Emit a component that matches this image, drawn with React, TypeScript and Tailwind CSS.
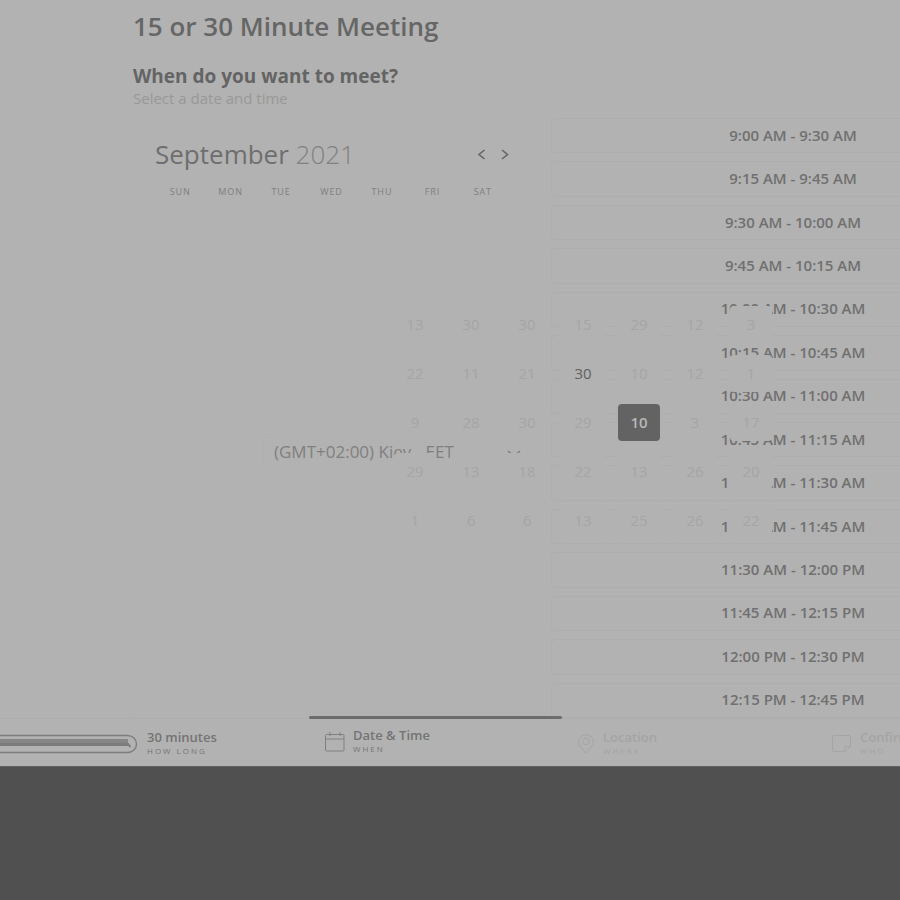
import React from "react";

const slots = [
  "9:00 AM - 9:30 AM",
  "9:15 AM - 9:45 AM",
  "9:30 AM - 10:00 AM",
  "9:45 AM - 10:15 AM",
  "10:00 AM - 10:30 AM",
  "10:15 AM - 10:45 AM",
  "10:30 AM - 11:00 AM",
  "10:45 AM - 11:15 AM",
  "11:00 AM - 11:30 AM",
  "11:15 AM - 11:45 AM",
  "11:30 AM - 12:00 PM",
  "11:45 AM - 12:15 PM",
  "12:00 PM - 12:30 PM",
  "12:15 PM - 12:45 PM",
];

const weekdays = ["SUN", "MON", "TUE", "WED", "THU", "FRI", "SAT"];

const weeks = [
  [13, 30, 30, 15, 29, 12, 3],
  [22, 11, 21, 30, 10, 12, 1],
  [9, 28, 30, 29, 10, 3, 17],
  [29, 13, 18, 22, 13, 26, 20],
  [1, 6, 6, 13, 25, 26, 22],
];

function dayClass(week: number, day: number) {
  if (week === 2 && day === 4) return "bg-[#636363] font-semibold text-[#b8b8b8]";
  if (week === 1 && day === 3) return "bg-[#b2b2b2] text-[#606060]";
  return "bg-[#b2b2b2] text-[#a5a5a5]";
}

function Chevron({ d }: { d: string }) {
  return (
    <svg width="14" height="14" viewBox="0 0 14 14" fill="none" stroke="currentColor" strokeWidth="1.6" aria-hidden="true">
      <path d={d} />
    </svg>
  );
}

function DurationIcon() {
  return (
    <svg className="shrink-0" width="138" height="20" viewBox="0 0 138 20" fill="none" stroke="#7e7e7e" strokeWidth="1.4" aria-hidden="true">
      <path d="M-2 1.5H127C133 1.5 136.5 5.5 136.5 10S133 18.500 127 18.500H-2" />
      <path d="M-2 5H128V12H-2Z" fill="#868686" stroke="none" />
      <path d="M-2 9H128V12H-2Z" fill="#7c7c7c" stroke="none" />
      <path d="M127 9L130.500 13" strokeWidth="2" />
    </svg>
  );
}

function CalendarIcon() {
  return (
    <svg className="shrink-0" width="20" height="20" viewBox="0 0 20 20" fill="none" stroke="#808080" aria-hidden="true">
      <rect x="0.5" y="2.500" width="18.500" height="16.500" rx="1" />
      <path d="M0.500 7H19M5 0V4M15 0V4" />
    </svg>
  );
}

function PinIcon() {
  return (
    <svg className="shrink-0" width="16" height="20" viewBox="0 0 16 20" fill="none" stroke="#a5a5a5" aria-hidden="true">
      <path d="M8 19C5.500 15.500 0.500 12 0.500 7.800A7.500 7.200 0 0 1 15.500 7.800C15.500 12 10.500 15.500 8 19Z" />
      <circle cx="8" cy="7.500" r="3.300" />
    </svg>
  );
}

function NoteIcon() {
  return (
    <svg className="shrink-0" width="19" height="18" viewBox="0 0 19 18" fill="none" stroke="#a5a5a5" aria-hidden="true">
      <path d="M2 0.500H17Q18.500 0.500 18.500 2V11.500L13 16.500H2Q0.500 16.500 0.500 15V2Q0.500 0.500 2 0.500Z" />
      <path d="M12.500 16.500V13Q12.500 11.500 14 11.500H18.500" />
    </svg>
  );
}

function Step({ title, label, icon, className }: { title: string; label: string; icon: React.ReactNode; className: string }) {
  return (
    <button type="button" className={`flex shrink-0 items-center text-left ${className}`}>
      {icon}
      <span className="flex flex-col whitespace-nowrap">
        <span className="text-[13px] leading-[15px] font-semibold">{title}</span>
        <span className="text-[8px] leading-3 tracking-[2px]">{label}</span>
      </span>
    </button>
  );
}

export default function App() {
  return (
    <div className="min-h-screen bg-[#505050] font-['Open_Sans','Noto_Sans',sans-serif] text-[#666666]">
      <main className="relative overflow-hidden border-b border-[#606060] bg-[#b2b2b2]">
        <header className="pt-[10px] pl-[133px]">
          <h1 className="text-[26px] leading-8 font-semibold text-[#666666]">15 or 30 Minute Meeting</h1>
          <h2 className="mt-[22px] text-[19px] leading-6 font-bold text-[#646464]">When do you want to meet?</h2>
          <p className="text-[15px] leading-5 text-[#989898]">Select a date and time</p>
        </header>

        <div className="mt-[10px] flex pl-[133px]">
          <section className="w-[398px] shrink-0 border-l border-[#b0b0b0] pt-5 pl-[21px]">
            <div className="flex items-center justify-between pr-[14px]">
              <h3 className="text-[26px] leading-8 text-[#6e6e6e]">
                September <span className="font-light text-[#808080]">2021</span>
              </h3>
              <div className="flex">
                <button type="button" aria-label="Previous month" className="flex h-6 w-6 items-center justify-center">
                  <Chevron d="M10.500 3L5 7.500L10.500 12" />
                </button>
                <button type="button" aria-label="Next month" className="flex h-6 w-6 items-center justify-center">
                  <Chevron d="M4 3L9.500 7.500L4 12" />
                </button>
              </div>
            </div>
            <div className="mt-[14px] grid w-[353px] grid-cols-7 text-center text-[9px] leading-4 tracking-widest text-[#808080]">
              {weekdays.map((name) => (
                <span key={name}>{name}</span>
              ))}
            </div>
            <div className="relative mt-[235px] ml-[108px]">
              <select
                aria-label="Time zone"
                className="h-[33px] w-full appearance-none rounded border border-[#b0b0b0] bg-transparent pl-[10px] text-[17px] text-[#808080]"
              >
                <option>(GMT+02:00) Kiev - EET</option>
              </select>
              <span className="pointer-events-none absolute top-[13px] right-[10px] text-[#808080]">
                <Chevron d="M1 3L7 8L13 3" />
              </span>
            </div>
          </section>

          <section aria-label="Available times" className="ml-5 grid h-[600px] w-[484px] shrink-0 auto-rows-fr gap-2">
            {slots.map((slot) => (
              <button key={slot} type="button" className="rounded border border-[#aeaeae] pb-[2px] text-[15px] leading-5 font-semibold text-[#707070]">
                {slot}
              </button>
            ))}
          </section>
        </div>

        <div className="absolute top-[306px] left-[394px] grid grid-cols-7 gap-x-[14px] gap-y-3">
          {weeks.map((week, w) =>
            week.map((day, d) => (
              <button key={`${w}-${d}`} type="button" className={`h-[37px] w-[42px] rounded text-[15px] ${dayClass(w, d)}`}>
                {day}
              </button>
            )),
          )}
        </div>

        <nav aria-label="Booking steps" className="flex h-12 border-t border-[#aeaeae]">
          <Step title="30 minutes" label="HOW LONG" icon={<DurationIcon />} className="w-[309px] gap-[9px] pt-[2px] text-[#747474]" />
          <div className="relative flex shrink-0">
            <Step title="Date & Time" label="WHEN" icon={<CalendarIcon />} className="w-[253px] gap-2 pb-[2px] pl-4 text-[#747474]" />
            <span className="absolute -top-[3px] left-0 h-[3px] w-full rounded bg-[#6c6c6c]" />
          </div>
          <Step title="Location" label="WHERE" icon={<PinIcon />} className="w-[253px] gap-[9px] pt-[2px] pl-4 text-[#a4a4a4]" />
          <Step title="Confirmation" label="WHO" icon={<NoteIcon />} className="w-[253px] gap-[9px] pt-[2px] pl-[17px] text-[#a4a4a4]" />
        </nav>
      </main>
    </div>
  );
}
